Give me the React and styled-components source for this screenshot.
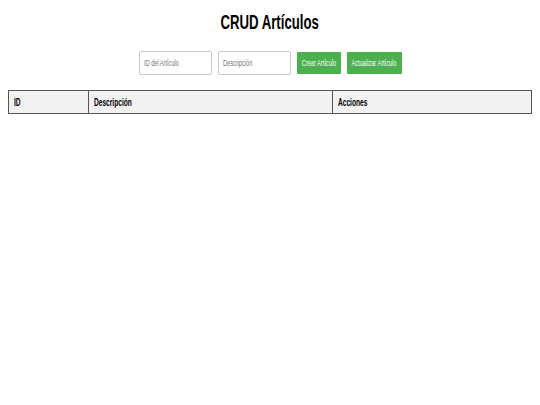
import React from "react";
import styled, { createGlobalStyle } from "styled-components";

const Global = createGlobalStyle`
  html, body { padding: 0; background: #fff; }
  body { margin: 8px; font-family: "Liberation Sans", Arial, sans-serif; color: #000; }
`;

const NARROW = 0.66;

const Narrow = styled.span`
  display: inline-block;
  white-space: nowrap;
  transform: scaleX(${NARROW});
  transform-origin: ${(p) => p.$origin || "left"} center;
`;

const Title = styled.h1`
  margin: 2px 0 0;
  text-align: center;
  font-size: 20px;
  line-height: 24px;
  font-weight: bold;
`;

const Form = styled.div`
  display: flex;
  justify-content: center;
  align-items: center;
  gap: 6px;
  margin-top: 17px;
  margin-left: 1px;
`;

const Field = styled.label`
  box-sizing: border-box;
  display: block;
  width: 73px;
  height: 24px;
  border: 1px solid #c8c8c8;
  border-radius: 2px;
  overflow: hidden;
  background: #fff;
`;

const Input = styled.input`
  box-sizing: border-box;
  display: block;
  width: ${Math.round(71 / NARROW)}px;
  height: 22px;
  padding: 0 0 0 6px;
  margin: 0;
  border: none;
  outline: none;
  background: transparent;
  font-family: "Liberation Sans", Arial, sans-serif;
  font-size: 8.5px;
  color: #000;
  transform: scaleX(${NARROW});
  transform-origin: left center;
  &::placeholder { color: #757575; }
`;

const Button = styled.button`
  box-sizing: border-box;
  display: flex;
  align-items: center;
  justify-content: center;
  width: ${(p) => p.$w}px;
  height: 22px;
  padding: 0;
  border: none;
  border-radius: 1px;
  background: #4caf50;
  color: #fff;
  font-family: "Liberation Sans", Arial, sans-serif;
  font-size: 8.5px;
  overflow: visible;
  cursor: pointer;
`;

const Table = styled.table`
  margin-top: 15px;
  width: 523px;
  border-collapse: collapse;
  table-layout: fixed;
`;

const Th = styled.th`
  box-sizing: border-box;
  width: ${(p) => p.$w}px;
  height: 23px;
  padding: 0 5px;
  text-align: left;
  font-size: 10px;
  font-weight: bold;
  color: #000;
  background: #f2f2f2;
  border: 1px solid #555;
  overflow: visible;
`;

export default function App() {
  return (
    <>
      <Global />
      <Title>
        <Narrow $origin="center">CRUD Artículos</Narrow>
      </Title>
      <Form>
        <Field>
          <Input placeholder="ID del Artículo" />
        </Field>
        <Field>
          <Input placeholder="Descripción" />
        </Field>
        <Button $w={44}>
          <Narrow $origin="center">Crear Artículo</Narrow>
        </Button>
        <Button $w={55}>
          <Narrow $origin="center">Actualizar Artículo</Narrow>
        </Button>
      </Form>
      <Table>
        <thead>
          <tr>
            <Th $w={80}>
              <Narrow>ID</Narrow>
            </Th>
            <Th $w={244}>
              <Narrow>Descripción</Narrow>
            </Th>
            <Th $w={199}>
              <Narrow>Acciones</Narrow>
            </Th>
          </tr>
        </thead>
        <tbody />
      </Table>
    </>
  );
}
